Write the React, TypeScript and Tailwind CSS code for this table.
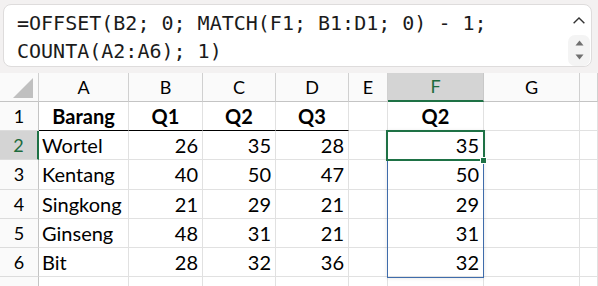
import React from "react";

const widths = [39, 90, 74, 73, 73, 39, 96, 96, 18];
const letters = ["", "A", "B", "C", "D", "E", "F", "G", ""];

type Cell = { t: string; align?: "l" | "r" | "c"; bold?: boolean; line?: boolean };

const rows: Cell[][] = [
  [
    { t: "Barang", align: "c", bold: true, line: true },
    { t: "Q1", align: "c", bold: true, line: true },
    { t: "Q2", align: "c", bold: true, line: true },
    { t: "Q3", align: "c", bold: true, line: true },
    { t: "" },
    { t: "Q2", align: "c", bold: true },
    { t: "" },
    { t: "" },
  ],
  ...[
    ["Wortel", "26", "35", "28", "35"],
    ["Kentang", "40", "50", "47", "50"],
    ["Singkong", "21", "29", "21", "29"],
    ["Ginseng", "48", "31", "21", "31"],
    ["Bit", "28", "32", "36", "32"],
  ].map((r) => [
    { t: r[0], align: "l" as const },
    { t: r[1], align: "r" as const },
    { t: r[2], align: "r" as const },
    { t: r[3], align: "r" as const },
    { t: "" },
    { t: r[4], align: "r" as const },
    { t: "" },
    { t: "" },
  ]),
  [{ t: "" }, { t: "" }, { t: "" }, { t: "" }, { t: "" }, { t: "" }, { t: "" }, { t: "" }],
];

const rowHeights = [29, 29, 30, 29, 29, 29, 29];

export default function App() {
  return (
    <div className="w-[598px] h-[286px] overflow-hidden bg-[#f3f1f1]">
      {/* formula bar */}
      <div className="pt-[4px] pl-[3px]">
        <div className="w-[589px] h-[63px] rounded-[8px] border border-[#dedcdc] bg-white flex">
          <div
            className="flex-1 pl-[13px] pt-[4px] text-[20px] leading-[28px] text-[#1b1b1b] whitespace-pre"
            style={{ fontFamily: '"DejaVu Sans Mono", monospace' }}
          >
            <div>=OFFSET(B2; 0; MATCH(F1; B1:D1; 0) - 1;</div>
            <div>COUNTA(A2:A6); 1)</div>
          </div>
          <div className="w-[24px] flex flex-col items-center">
            <svg width="14" height="9" viewBox="0 0 14 9" className="mt-[11px]">
              <path d="M1.5 7.5 L7 2 L12.5 7.5" fill="none" stroke="#333" strokeWidth="1.4" />
            </svg>
            <div className="mt-[10px] w-[22px] h-[32px] rounded-[7px] bg-[#f4f4f4] flex flex-col items-center justify-center gap-[8px]">
              <svg width="9" height="6" viewBox="0 0 9 6">
                <path d="M0.5 5.5 L4.5 0.5 L8.5 5.5 Z" fill="#707070" />
              </svg>
              <svg width="9" height="6" viewBox="0 0 9 6">
                <path d="M0.5 0.5 L4.5 5.5 L8.5 0.5 Z" fill="#707070" />
              </svg>
            </div>
          </div>
        </div>
      </div>

      {/* grid */}
      <div className="relative mt-[6px] bg-white" style={{ fontFamily: "Lato, sans-serif" }}>
        {/* column header */}
        <div className="flex h-[29px] bg-[#fafafa]">
          {widths.map((w, i) => {
            const sel = i === 6;
            return (
              <div
                key={i}
                style={{ width: w }}
                className={
                  "shrink-0 h-full flex items-center justify-center text-[18px] leading-[29px] border-r " +
                  (sel
                    ? "bg-[#d4d4d4] text-[#1e6b3c] border-[#c8c8c8] border-b-2 border-b-[#1e7145]"
                    : "text-black border-[#d0d0d0] border-b border-b-[#c4c4c4]")
                }
              >
                {i === 0 ? (
                  <svg width="22" height="22" viewBox="0 0 22 22" className="ml-[8px] mt-[1px]">
                    <path d="M21 1 L21 21 L1 21 Z" fill="#c0c0c0" />
                  </svg>
                ) : (
                  letters[i]
                )}
              </div>
            );
          })}
        </div>

        {rows.map((r, ri) => (
          <div key={ri} className="flex" style={{ height: rowHeights[ri] }}>
            <div
              style={{ width: widths[0] }}
              className={
                "shrink-0 h-full flex items-center justify-center text-[18px] border-b border-b-[#dcdcdc] " +
                (ri === 1
                  ? "bg-[#d4d4d4] text-[#1e6b3c] border-r-2 border-r-[#1e7145]"
                  : "bg-[#fafafa] text-black border-r border-r-[#c4c4c4]")
              }
            >
              {ri < 6 ? ri + 1 : ""}
            </div>
            {r.map((c, ci) => (
              <div
                key={ci}
                style={{ width: widths[ci + 1] }}
                className={
                  "shrink-0 h-full border-r border-r-[#e1e1e1] text-[20px] leading-[29px] text-black whitespace-nowrap overflow-hidden " +
                  (c.line ? "border-b border-b-black " : "border-b border-b-[#e1e1e1] ") +
                  (c.bold ? "font-bold " : "") +
                  (c.align === "r" ? "text-right pr-[4px]" : c.align === "c" ? "text-center" : "pl-[3px]")
                }
              >
                {c.t}
              </div>
            ))}
            <div style={{ width: widths[8] }} className="shrink-0 h-full border-b border-b-[#e1e1e1]" />
          </div>
        ))}

        {/* spill range border F2:F6 */}
        <div className="absolute left-[387px] top-[58px] w-[97px] h-[147px] border border-[#3f6cab] shadow-[0_0_4px_rgba(0,0,0,0.12)] pointer-events-none" />
        {/* active cell F2 */}
        <div className="absolute left-[386px] top-[57px] w-[99px] h-[31px] border-2 border-[#1e7145] pointer-events-none" />
        {/* fill handle */}
        <div className="absolute left-[480px] top-[84px] w-[7px] h-[7px] bg-[#1e7145] border border-white pointer-events-none" />
      </div>
    </div>
  );
}
